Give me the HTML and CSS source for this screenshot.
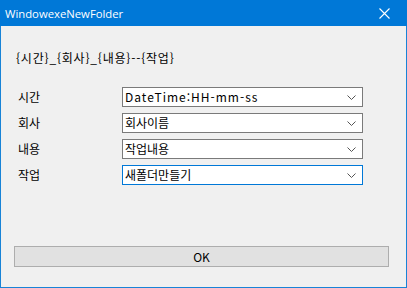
FILE: index.html
```html
<!DOCTYPE html>
<html lang="ko">
<head>
    <meta charset="UTF-8">
    <title>WindowexeNewFolder</title>
    <link rel="stylesheet" href="styles.css">
</head>
<body>
    <div class="window">
        <div class="titlebar">
            <span class="title">WindowexeNewFolder</span>
            <svg class="close" width="11" height="11" viewBox="0 0 11 11">
                <path d="M0.5 0.5 L10.5 10.5 M10.5 0.5 L0.5 10.5" stroke="#fff" stroke-width="1.1" fill="none"/>
            </svg>
        </div>
        <div class="content">
            <div class="pattern">{시간}_{회사}_{내용}--{작업}</div>

            <div class="fields">
                <label class="field-label">시간</label>
                <div class="combo"><span class="latin">DateTime:HH-mm-ss</span><svg class="arrow" width="9" height="5" viewBox="0 0 9 5"><path d="M0.5 0.5 L4.5 4.5 L8.5 0.5" stroke="#555" fill="none"/></svg></div>

                <label class="field-label">회사</label>
                <div class="combo"><span>회사이름</span><svg class="arrow" width="9" height="5" viewBox="0 0 9 5"><path d="M0.5 0.5 L4.5 4.5 L8.5 0.5" stroke="#555" fill="none"/></svg></div>

                <label class="field-label">내용</label>
                <div class="combo"><span>작업내용</span><svg class="arrow" width="9" height="5" viewBox="0 0 9 5"><path d="M0.5 0.5 L4.5 4.5 L8.5 0.5" stroke="#555" fill="none"/></svg></div>

                <label class="field-label">작업</label>
                <div class="combo focused"><span>새폴더만들기</span><svg class="arrow" width="9" height="5" viewBox="0 0 9 5"><path d="M0.5 0.5 L4.5 4.5 L8.5 0.5" stroke="#555" fill="none"/></svg></div>
            </div>

            <button class="ok">OK</button>
        </div>
    </div>
</body>
</html>
```

FILE: styles.css
```css
html, body {
    margin: 0;
    padding: 0;
}
body {
    font-family: "Noto Sans CJK KR", "Noto Sans", sans-serif;
    font-size: 12px;
    color: #000;
    background: #f0f0f0;
}
.window {
    width: 407px;
    height: 288px;
    box-sizing: border-box;
    border: 1px solid #1883d7;
    border-top: none;
    background: #f0f0f0;
    display: flex;
    flex-direction: column;
}
.titlebar {
    height: 26px;
    margin: 0 -1px;
    background: #0078d7;
    display: flex;
    align-items: center;
    justify-content: space-between;
    padding: 0 17px 0 5px;
}
.title {
    font-family: "Open Sans", "Noto Sans", sans-serif;
    color: #fff;
    font-size: 11.3px;
}
.close {
    display: block;
}
.content {
    flex: 1;
    display: flex;
    flex-direction: column;
    padding: 25px 17px 0 15px;
}
.pattern {
    line-height: 14px;
    height: 14px;
    letter-spacing: 0.8px;
}
.fields {
    margin-top: 22px;
    display: grid;
    grid-template-columns: 106px 241px;
    grid-auto-rows: 20px;
    row-gap: 6px;
    align-items: center;
}
.field-label {
    padding-left: 2px;
    line-height: 14px;
}
.combo {
    height: 20px;
    box-sizing: border-box;
    border: 1px solid #7a7a7a;
    background: #fff;
    display: flex;
    align-items: center;
    justify-content: space-between;
    padding: 0 6px 0 2px;
    line-height: 16px;
}
.combo .latin {
    letter-spacing: 1px;
}
.combo.focused {
    border-color: #0078d7;
}
.arrow {
    display: block;
}
.ok {
    margin: 61px 0 0 -2px;
    width: 375px;
    height: 21px;
    background: #e1e1e1;
    border: 1px solid #adadad;
    font-family: "Noto Sans CJK KR", "Noto Sans", sans-serif;
    font-size: 12px;
    padding: 0;
    color: #000;
}
```
